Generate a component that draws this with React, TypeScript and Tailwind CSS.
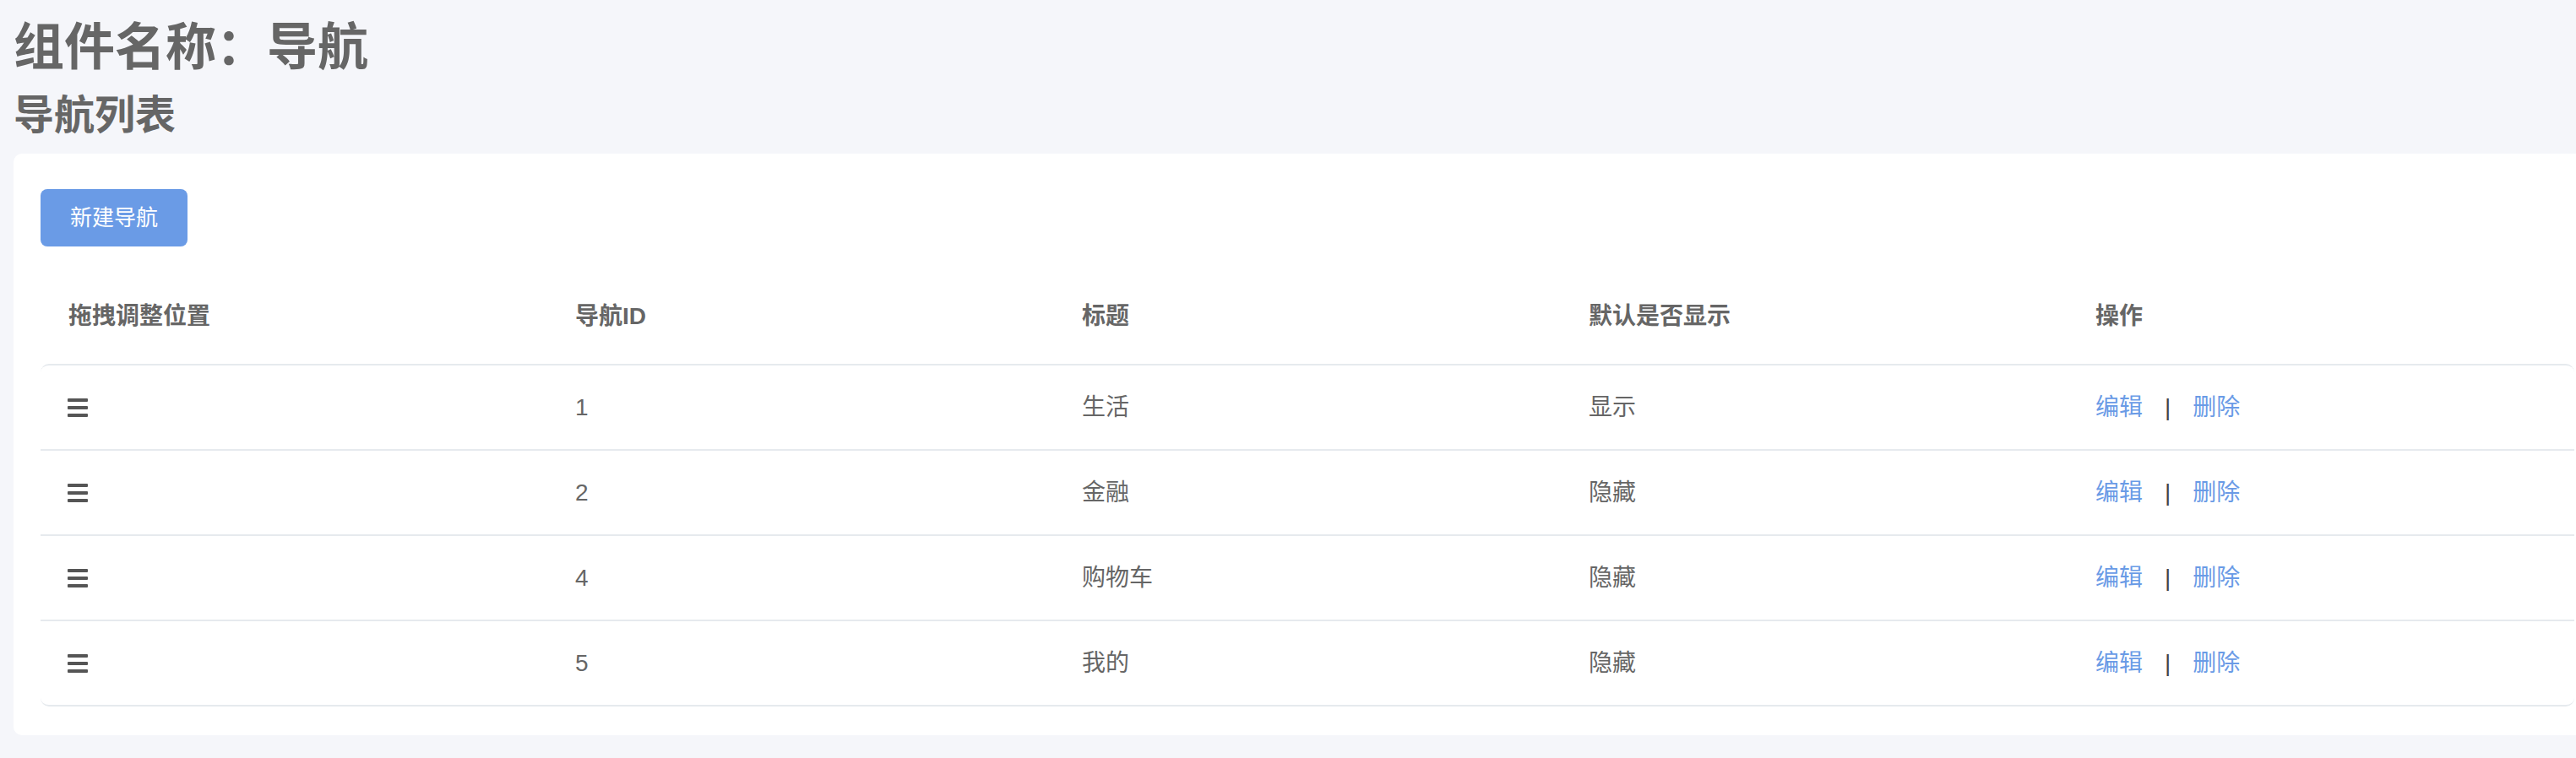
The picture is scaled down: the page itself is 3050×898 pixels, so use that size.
import React from 'react';

type NavRow = {
  id: number;
  title: string;
  shown: boolean;
};

const rows: NavRow[] = [
  { id: 1, title: '生活', shown: true },
  { id: 2, title: '金融', shown: false },
  { id: 4, title: '购物车', shown: false },
  { id: 5, title: '我的', shown: false },
];

const headers = ['拖拽调整位置', '导航ID', '标题', '默认是否显示', '操作'];

function DragHandle() {
  return (
    <svg width="24" height="22" viewBox="0 0 24 22" className="-ml-[1px]">
      <rect x="0" y="0" width="24" height="4" rx="1" fill="#555" />
      <rect x="0" y="9" width="24" height="4" rx="1" fill="#555" />
      <rect x="0" y="18" width="24" height="4" rx="1" fill="#555" />
    </svg>
  );
}

export default function App() {
  return (
    <div className="min-h-screen overflow-hidden bg-[#f5f6fa] pl-4 pt-px font-['Liberation_Sans','Noto_Sans_CJK_SC',sans-serif] text-[#666]">
      <h1 className="mt-[26px] text-[60px] leading-[60px] font-semibold">组件名称：导航</h1>
      <h2 className="mt-[26px] text-[48px] leading-[48px] font-semibold">导航列表</h2>

      <div className="mt-[21px] w-[3064px] rounded-[10px] bg-white px-8 pt-[42px] pb-[34px]">
        <button className="h-[68px] rounded-lg bg-[#6a9be6] px-[35px] text-[26px] leading-none text-white">
          新建导航
        </button>

        <div className="mt-[26px] w-[3000px]">
          {/* Header */}
          <div className="grid h-[113px] grid-cols-5 items-center text-[28px] font-semibold">
            {headers.map((h) => (
              <div key={h} className="pl-[33px]">
                {h}
              </div>
            ))}
          </div>

          {/* Body */}
          <div className="rounded-[10px] border-y-2 border-[#e6eaee]">
            {rows.map((r, i) => (
              <div
                key={r.id}
                className={
                  'grid grid-cols-5 items-center text-[28px] ' +
                  (i < rows.length - 1 ? 'h-[101px] border-b-2 border-[#e6eaee]' : 'h-[99px]')
                }
              >
                <div className="pl-[33px]">
                  <DragHandle />
                </div>
                <div className="pl-[33px]">{r.id}</div>
                <div className="pl-[33px]">{r.title}</div>
                <div className="pl-[33px]">{r.shown ? '显示' : '隐藏'}</div>
                <div className="flex items-center pl-[33px]">
                  <a className="cursor-pointer text-[#6a9be6]">编辑</a>
                  <span className="mx-[26px] text-[#444]">|</span>
                  <a className="cursor-pointer text-[#6a9be6]">删除</a>
                </div>
              </div>
            ))}
          </div>
        </div>
      </div>
    </div>
  );
}
